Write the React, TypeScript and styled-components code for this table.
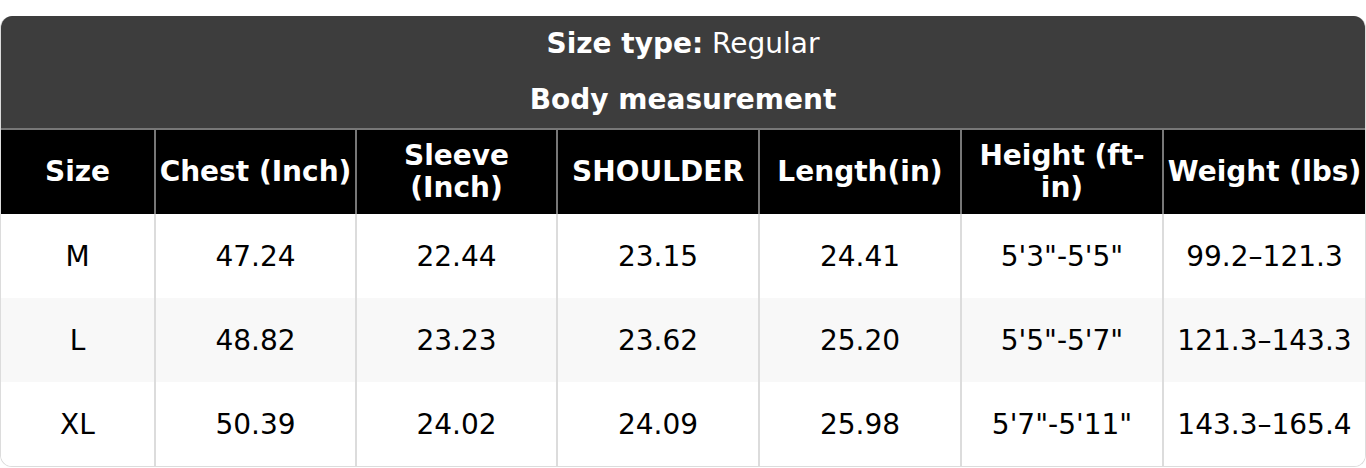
import styled, { createGlobalStyle } from 'styled-components';

const GlobalStyle = createGlobalStyle`
  html, body {
    margin: 0;
    padding: 0;
    overflow: hidden;
    background-color: #fff;
    font-family: 'DejaVu Sans', 'Liberation Sans', sans-serif;
  }
`;

const headers = [
  'Size',
  'Chest (Inch)',
  'Sleeve (Inch)',
  'SHOULDER',
  'Length(in)',
  'Height (ft-in)',
  'Weight (lbs)',
];

const rows = [
  ['M', '47.24', '22.44', '23.15', '24.41', `5'3"-5'5"`, '99.2–121.3'],
  ['L', '48.82', '23.23', '23.62', '25.20', `5'5"-5'7"`, '121.3–143.3'],
  ['XL', '50.39', '24.02', '24.09', '25.98', `5'7"-5'11"`, '143.3–165.4'],
];

const App = () => {
  return (
    <>
      <GlobalStyle />
      <Page>
        <Chart>
          <Caption>
            <CaptionLine>
              <strong>Size type:</strong> Regular
            </CaptionLine>
            <CaptionLine>
              <strong>Body measurement</strong>
            </CaptionLine>
          </Caption>
          <HeadRow>
            {headers.map((h) => (
              <HeadCell key={h}>{h}</HeadCell>
            ))}
          </HeadRow>
          {rows.map((row, i) => (
            <BodyRow key={row[0]} $striped={i % 2 === 1}>
              {row.map((v, j) => (
                <BodyCell key={j}>{v}</BodyCell>
              ))}
            </BodyRow>
          ))}
        </Chart>
      </Page>
    </>
  );
};

export default App;

const Page = styled.div`
  padding-top: 16px;
`;

const Chart = styled.div`
  width: 100%;
  box-sizing: border-box;
  border: 1px solid #dcdcdc;
  border-top: none;
  border-radius: 12px;
  overflow: hidden;
`;

const Caption = styled.div`
  background-color: #3d3d3d;
  color: #fff;
  text-align: center;
  font-size: 28px;
`;

const CaptionLine = styled.div`
  height: 56px;
  line-height: 56px;
  white-space: nowrap;

  strong {
    font-weight: bold;
  }
`;

const Grid = styled.div`
  display: grid;
  grid-template-columns: 153px 201px 201px 202px 202px 202px 1fr;
`;

const HeadRow = styled(Grid)`
  background-color: #000;
  border-top: 2px solid #777;
`;

const HeadCell = styled.div`
  display: flex;
  align-items: center;
  justify-content: center;
  height: 84px;
  padding: 0 3px;
  text-align: center;
  color: #fff;
  font-size: 28px;
  font-weight: bold;
  line-height: 32px;
  border-left: 2px solid #777;

  &:first-child {
    border-left: none;
  }
`;

const BodyRow = styled(Grid)<{ $striped: boolean }>`
  background-color: ${(p) => (p.$striped ? '#f8f8f8' : '#fff')};
`;

const BodyCell = styled.div`
  display: flex;
  align-items: center;
  justify-content: center;
  height: 84px;
  color: #000;
  font-size: 28px;
  white-space: nowrap;
  border-left: 2px solid #dcdcdc;

  &:first-child {
    border-left: none;
  }
`;
